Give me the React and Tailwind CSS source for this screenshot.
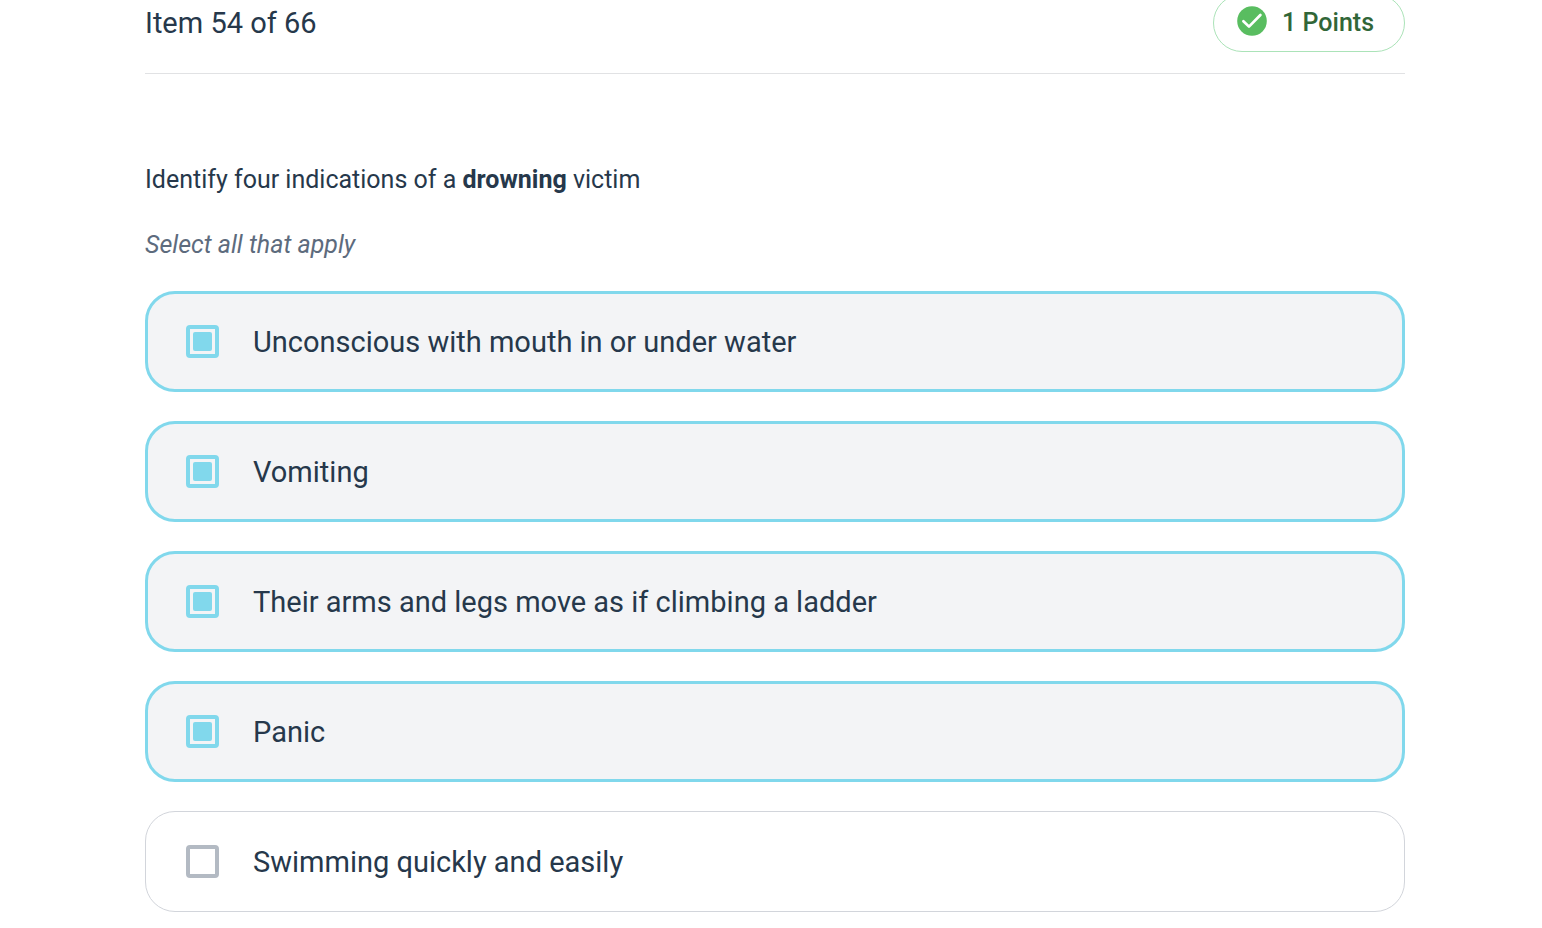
import React, { useState } from "react";

const options = [
  { id: "unconscious", label: "Unconscious with mouth in or under water" },
  { id: "vomiting", label: "Vomiting" },
  { id: "climbing", label: "Their arms and legs move as if climbing a ladder" },
  { id: "panic", label: "Panic" },
  { id: "swimming", label: "Swimming quickly and easily" },
];

// Green circle with a rounded tick
const CheckIcon = () => (
  <svg viewBox="0 0 30 30" className="w-[30px] h-[30px] mb-1" aria-hidden="true">
    <circle cx="15" cy="15" r="14.8" fill="#59bd60" />
    <path
      d="M6.4 15.2 L12 20.6 L23.4 9"
      fill="none"
      stroke="#fff"
      strokeWidth="2.7"
      strokeLinecap="round"
      strokeLinejoin="round"
    />
  </svg>
);

const Option = ({ id, label, checked, onChange }) => (
  <label
    htmlFor={id}
    className={`flex items-center h-[101px] rounded-[30px] gap-[34px] cursor-pointer ${
      checked
        ? "border-3 border-[#81d8ec] bg-[#f3f4f6] px-[38px]"
        : "border border-[#d2d5db] bg-transparent px-[40px]"
    }`}
  >
    <input
      id={id}
      type="checkbox"
      checked={checked}
      onChange={onChange}
      className="appearance-none shrink-0 grid place-content-center w-[33px] h-[33px] border-4 border-[#b3bac3] bg-transparent rounded-[4px] cursor-pointer checked:border-[#81d8ec] checked:before:block checked:before:w-[19px] checked:before:h-[19px] checked:before:rounded-[2px] checked:before:bg-[#81d8ec] checked:before:content-['']"
    />
    <span className="text-[29px] leading-[36px]">{label}</span>
  </label>
);

export default function App() {
  const [selected, setSelected] = useState([
    "unconscious",
    "vomiting",
    "climbing",
    "panic",
  ]);

  const toggle = (id) => {
    setSelected((prev) =>
      prev.includes(id) ? prev.filter((item) => item !== id) : [...prev, id]
    );
  };

  return (
    <div className="overflow-hidden bg-white text-[#26384b] font-['Roboto',sans-serif] pl-[145px] pr-[137px] pb-4">
      {/* Header */}
      <header className="flex items-center justify-between -mt-1.5 pb-[21px] border-b border-[#e1e2e4]">
        <h1 className="text-[29px] leading-[36px]">Item 54 of 66</h1>
        <div className="flex items-center gap-[15px] h-[58px] pl-[23px] pr-[30px] border border-[#abe3b8] rounded-full">
          <CheckIcon />
          <span className="text-[25px] leading-[32px] font-medium text-[#316638]">
            1 Points
          </span>
        </div>
      </header>

      <main className="pt-[90px]">
        <p id="question" className="text-[25px] leading-[32px]">
          Identify four indications of a <strong>drowning</strong> victim
        </p>
        <p className="mt-[33px] text-[25px] leading-[32px] italic text-[#5d6b7d]">
          Select all that apply
        </p>

        {/* Options */}
        <div
          role="group"
          aria-labelledby="question"
          className="flex flex-col gap-[29px] mt-[30px]"
        >
          {options.map((option) => (
            <Option
              key={option.id}
              id={option.id}
              label={option.label}
              checked={selected.includes(option.id)}
              onChange={() => toggle(option.id)}
            />
          ))}
        </div>
      </main>
    </div>
  );
}
